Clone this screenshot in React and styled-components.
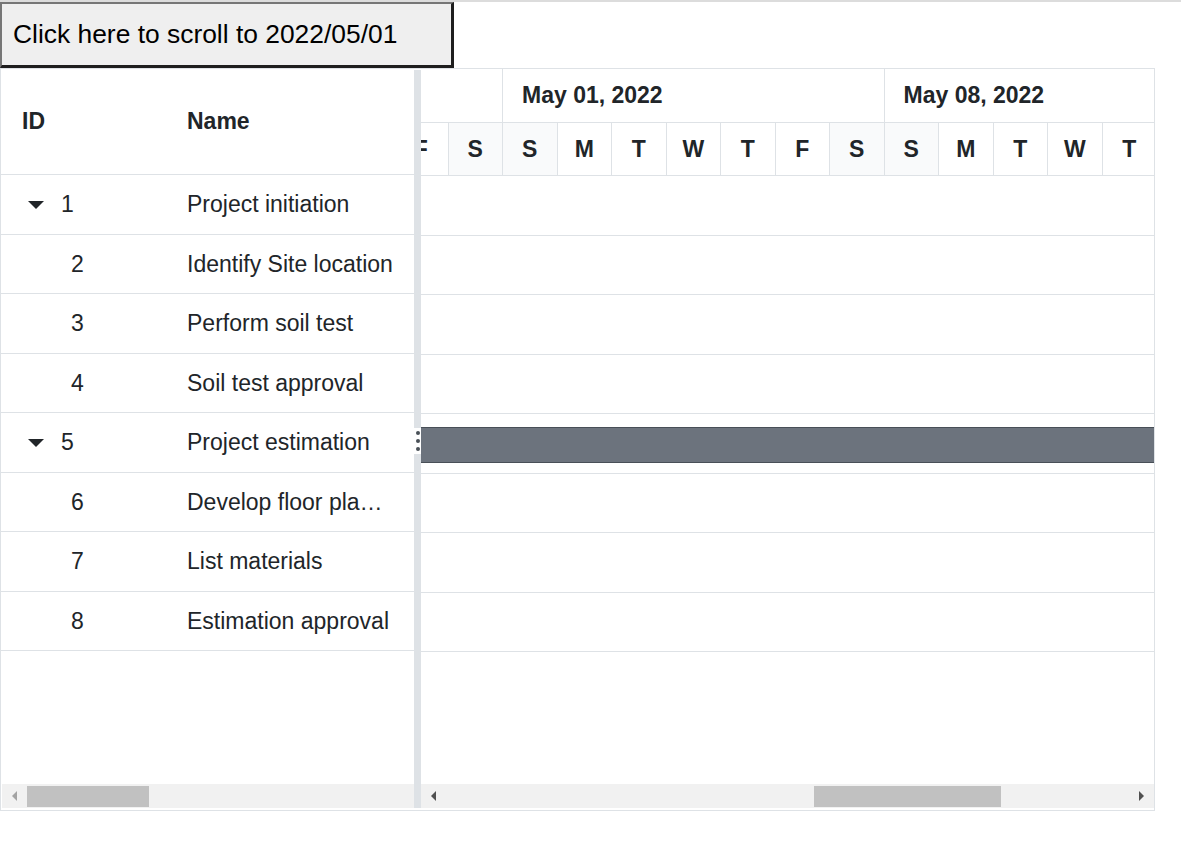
import React from 'react'
import styled, { createGlobalStyle } from 'styled-components'

const GlobalStyle = createGlobalStyle`
  body {
    margin: 0;
    background: #fff;
    font-family: "Liberation Sans", Arial, sans-serif;
    color: #212529;
  }
`

const DAY = 54.5
const tasks = [
  { id: 1, name: 'Project initiation', parent: true },
  { id: 2, name: 'Identify Site location' },
  { id: 3, name: 'Perform soil test' },
  { id: 4, name: 'Soil test approval' },
  { id: 5, name: 'Project estimation', parent: true, bar: true },
  { id: 6, name: 'Develop floor plan for estimation' },
  { id: 7, name: 'List materials' },
  { id: 8, name: 'Estimation approval' },
]
const weeks = ['Apr 24, 2022', 'May 01, 2022', 'May 08, 2022']
const letters = ['S', 'M', 'T', 'W', 'T', 'F', 'S']

function App() {
  return (
    <>
      <GlobalStyle />
      <TopRule />
      <ScrollButton>Click here to scroll to 2022/05/01</ScrollButton>
      <Gantt>
        <GridPane>
          <GridHeader>
            <IdCell $bold>ID</IdCell>
            <NameCell $bold>Name</NameCell>
          </GridHeader>
          {tasks.map((t) => (
            <GridRow key={t.id}>
              <IdCell $child={!t.parent}>
                {t.parent && <Caret />}
                {t.id}
              </IdCell>
              <NameCell>{t.name}</NameCell>
            </GridRow>
          ))}
          <Filler />
          <Scrollbar>
            <ArrowBtn><Arrow $dir="left" $light /></ArrowBtn>
            <Thumb $offset={0} $width={122} />
          </Scrollbar>
        </GridPane>

        <Splitter>
          <Dots>
            <Dot />
            <Dot />
            <Dot />
          </Dots>
        </Splitter>

        <ChartPane>
          <Timeline>
            <Tier>
              {weeks.map((w) => (
                <WeekCell key={w}>{w}</WeekCell>
              ))}
            </Tier>
            <Tier $bottom>
              {weeks.flatMap((w) =>
                letters.map((l, i) => (
                  <DayCell key={w + i} $weekend={i === 0 || i === 6}>{l}</DayCell>
                ))
              )}
            </Tier>
          </Timeline>
          {tasks.map((t) => (
            <ChartRow key={t.id}>{t.bar && <Bar />}</ChartRow>
          ))}
          <Filler />
          <Scrollbar $chart>
            <ArrowBtn><Arrow $dir="left" /></ArrowBtn>
            <Thumb $offset={368} $width={187} />
            <Filler />
            <ArrowBtn><Arrow $dir="right" /></ArrowBtn>
          </Scrollbar>
        </ChartPane>
      </Gantt>
    </>
  )
}

export default App

const TopRule = styled.div`
  height: 2px;
  background: #dcdcdc;
`

const ScrollButton = styled.button`
  display: block;
  width: 454px;
  height: 66px;
  margin: 0;
  padding: 0 11px;
  text-align: left;
  font-family: "Liberation Sans", Arial, sans-serif;
  font-size: 26.4px;
  color: #000;
  background: #efefef;
  border-style: solid;
  border-width: 2px 3px 3px 2px;
  border-color: #767676 #1e1e1e #1e1e1e #767676;
  cursor: pointer;
`

const Gantt = styled.div`
  display: flex;
  width: 1155px;
  height: 743px;
  box-sizing: border-box;
  border: 1px solid #dee2e6;
`

const GridPane = styled.div`
  display: flex;
  flex-direction: column;
  width: 413px;
  padding-bottom: 2px;
  overflow: hidden;
`

const GridHeader = styled.div`
  display: flex;
  align-items: center;
  height: 106px;
  box-sizing: border-box;
  padding-bottom: 1px;
  border-bottom: 1px solid #dee2e6;
`

const GridRow = styled.div`
  display: flex;
  align-items: center;
  height: 59.5px;
  box-sizing: border-box;
  padding-top: 1px;
  border-bottom: 1px solid #dee2e6;
  font-size: 23px;
`

const IdCell = styled.div`
  display: flex;
  align-items: center;
  width: 165px;
  flex-shrink: 0;
  box-sizing: border-box;
  padding-left: ${(p) => (p.$bold ? '21px' : p.$child ? '70px' : '27px')};
  font-size: 23px;
  font-weight: ${(p) => (p.$bold ? 700 : 400)};
`

const NameCell = styled.div`
  flex: 1;
  min-width: 0;
  padding: 0 19px 0 21px;
  font-size: 23px;
  font-weight: ${(p) => (p.$bold ? 700 : 400)};
  white-space: nowrap;
  overflow: hidden;
  text-overflow: ellipsis;
`

const Caret = styled.span`
  width: 0;
  height: 0;
  margin-right: 17px;
  border-left: 8px solid transparent;
  border-right: 8px solid transparent;
  border-top: 8px solid #212529;
`

const Filler = styled.div`
  flex: 1;
`

const Scrollbar = styled.div`
  display: flex;
  align-items: center;
  height: 24px;
  flex-shrink: 0;
  margin-left: ${(p) => (p.$chart ? '0' : '1px')};
  background: #f1f1f1;
`

const ArrowBtn = styled.div`
  display: flex;
  align-items: center;
  justify-content: center;
  width: 25px;
  height: 24px;
  flex-shrink: 0;
`

const Arrow = styled.span`
  width: 0;
  height: 0;
  border-top: 5px solid transparent;
  border-bottom: 5px solid transparent;
  ${(p) =>
    p.$dir === 'left'
      ? `border-right: 5px solid ${p.$light ? '#a3a3a3' : '#505050'};`
      : `border-left: 5px solid #505050;`}
`

const Thumb = styled.div`
  height: 21px;
  flex-shrink: 0;
  margin-left: ${(p) => p.$offset}px;
  width: ${(p) => p.$width}px;
  background: #c1c1c1;
`

const Splitter = styled.div`
  position: relative;
  width: 7px;
  flex-shrink: 0;
  margin: 1px 0 2px;
  background: #dee2e6;
`

const Dots = styled.div`
  position: absolute;
  top: 358px;
  left: 0;
  width: 7px;
  height: 26px;
  display: flex;
  flex-direction: column;
  align-items: center;
  justify-content: center;
  gap: 4px;
  background: #fff;
`

const Dot = styled.span`
  width: 4px;
  height: 4px;
  border-radius: 50%;
  background: #495057;
`

const ChartPane = styled.div`
  display: flex;
  flex-direction: column;
  flex: 1;
  min-width: 0;
  padding-bottom: 2px;
  overflow: hidden;
`

const Timeline = styled.div`
  margin-left: -299.5px;
  border-bottom: 1px solid #dee2e6;
`

const Tier = styled.div`
  display: flex;
  height: ${(p) => (p.$bottom ? '52px' : '53px')};
  ${(p) => (p.$bottom ? '' : 'border-bottom: 1px solid #dee2e6;')}
`

const WeekCell = styled.div`
  display: flex;
  align-items: center;
  width: ${DAY * 7}px;
  flex-shrink: 0;
  box-sizing: border-box;
  padding-left: 19px;
  border-right: 1px solid #dee2e6;
  font-size: 23px;
  font-weight: 700;
  white-space: nowrap;
`

const DayCell = styled.div`
  display: flex;
  align-items: center;
  justify-content: center;
  width: ${DAY}px;
  flex-shrink: 0;
  box-sizing: border-box;
  border-right: 1px solid #dee2e6;
  background: ${(p) => (p.$weekend ? '#f9fafb' : '#fff')};
  font-size: 23px;
  font-weight: 700;
`

const ChartRow = styled.div`
  height: 59.5px;
  box-sizing: border-box;
  padding-top: 13px;
  border-bottom: 1px solid #dee2e6;
`

const Bar = styled.div`
  height: 36px;
  box-sizing: border-box;
  background: #6c737d;
  border-top: 1px solid #484f57;
  border-bottom: 1px solid #484f57;
`
